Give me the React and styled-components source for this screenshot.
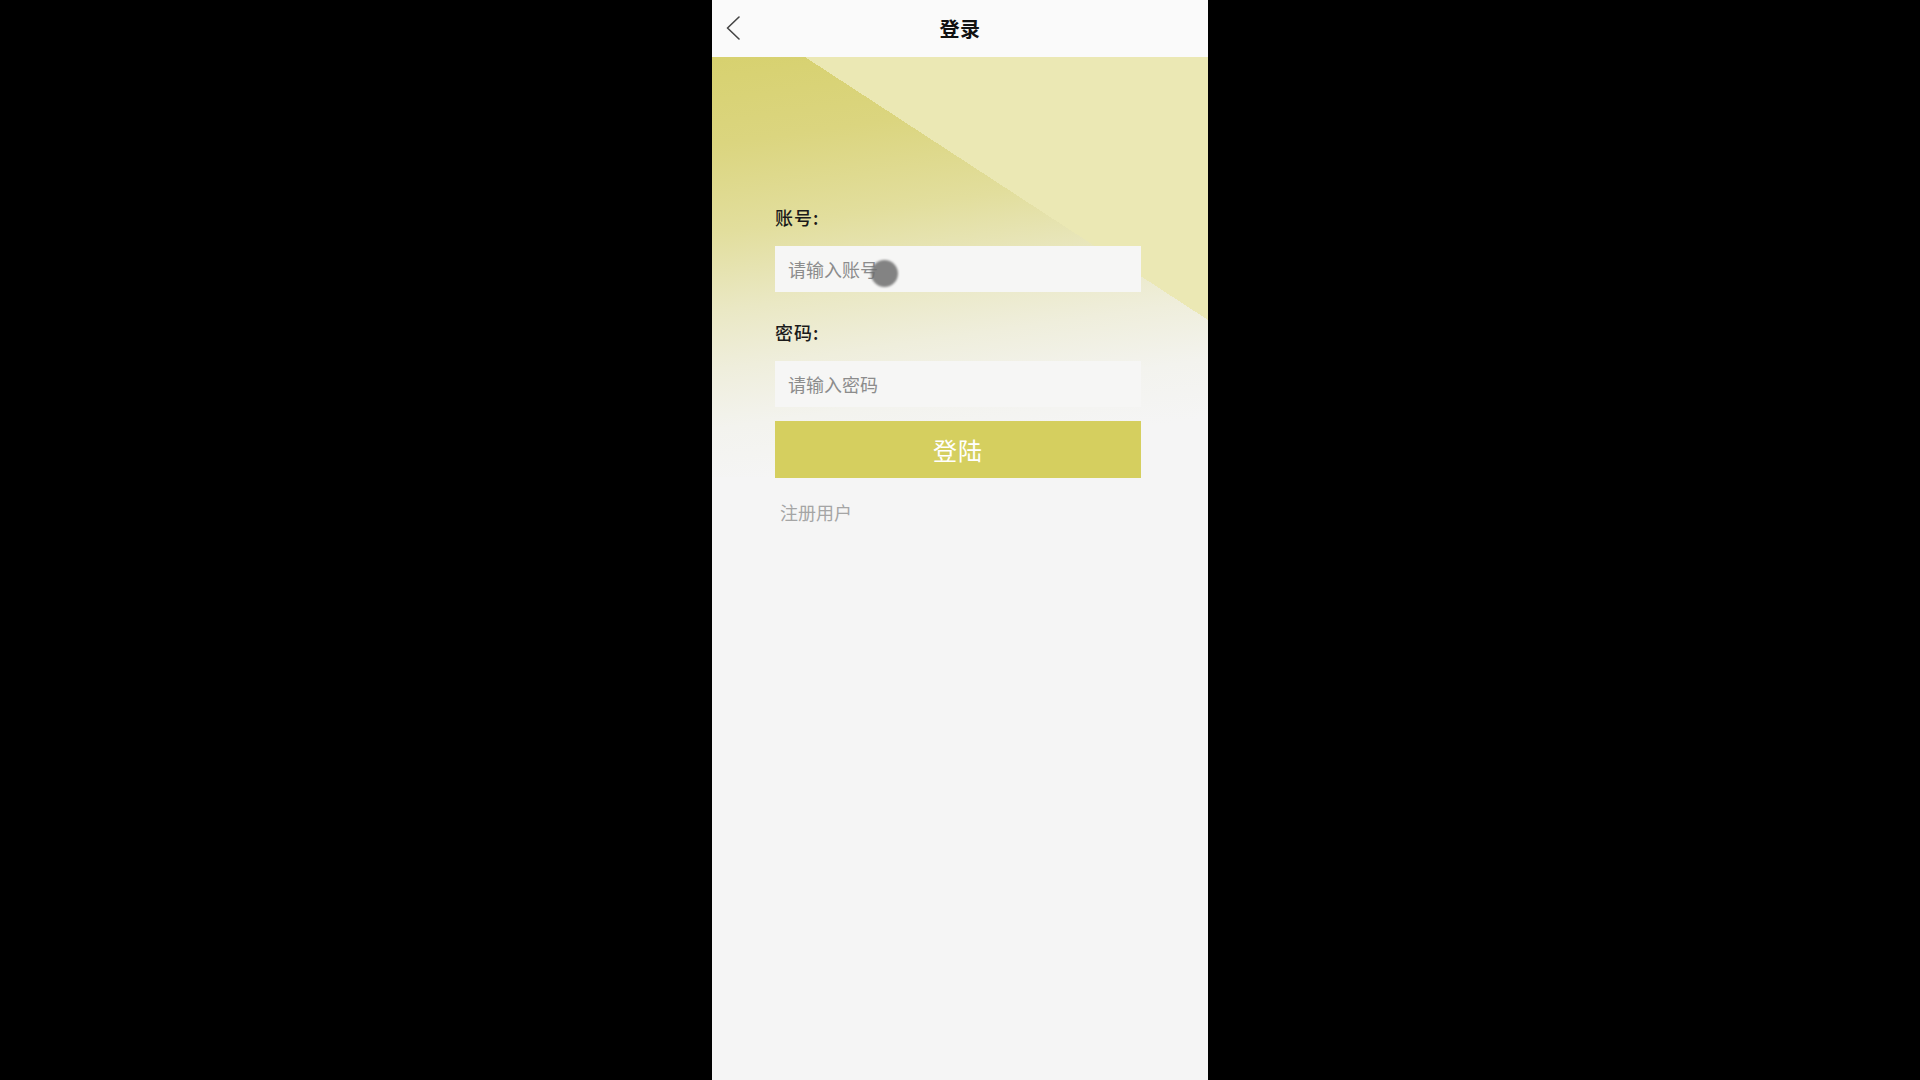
import React from 'react'
import styled, { createGlobalStyle } from 'styled-components'

const GlobalStyle = createGlobalStyle`
html, body {
    margin: 0;
    padding: 0;
    background: #000;
    font-family: "Noto Sans CJK SC", "Noto Sans", sans-serif;
}
`;

export default function App() {
    return (
        <>
            <GlobalStyle />
            <Screen>
                <Phone>
                    <Header>
                        <BackButton aria-label="返回">
                            <svg width="14" height="24" viewBox="0 0 14 24">
                                <polyline points="13,1 1.5,12 13,23" fill="none" stroke="#444" strokeWidth="1.6" strokeLinecap="round" strokeLinejoin="round" />
                            </svg>
                        </BackButton>
                        <Title>登录</Title>
                    </Header>
                    <Body>
                        <Label>账号:</Label>
                        <Input placeholder="请输入账号" />
                        <Label $top={28}>密码:</Label>
                        <Input type="password" placeholder="请输入密码" />
                        <LoginButton>登陆</LoginButton>
                        <RegisterLink>注册用户</RegisterLink>
                    </Body>
                    <TouchDot />
                </Phone>
            </Screen>
        </>
    )
}

const Screen = styled.div`
display: flex;
justify-content: center;
min-height: 1080px;
background: #000;
`;

const Phone = styled.div`
position: relative;
width: 496px;
min-height: 1080px;
display: flex;
flex-direction: column;
background: #f5f5f5;
`;

const Header = styled.div`
height: 57px;
display: flex;
align-items: center;
justify-content: center;
background: #fafafa;
position: relative;
flex-shrink: 0;
`;

const BackButton = styled.button`
position: absolute;
left: 14px;
top: 16px;
padding: 0;
border: 0;
background: none;
display: flex;
`;

const Title = styled.h1`
margin: 0;
font-size: 20px;
font-weight: 700;
color: #111;
letter-spacing: 0.5px;
`;

const Body = styled.div`
flex: 1;
display: flex;
flex-direction: column;
padding: 148px 67px 0 63px;
background:
    linear-gradient(to top right, transparent 50%, #ebe8b4 50%) right top / 403px 263px no-repeat,
    linear-gradient(172deg, #d7d16f 0%, #dbd57f 18%, #e2de9d 36%, #eae8c4 52%, #efeedc 64%, #f3f3ee 76%, #f5f5f5 88%) left top / 100% 420px no-repeat,
    #f5f5f5;
`;

const Label = styled.div`
margin-top: ${p => p.$top || 0}px;
font-size: 18px;
line-height: 24px;
font-weight: 500;
color: #1a1a1a;
letter-spacing: 1px;
`;

const Input = styled.input`
margin-top: 17px;
height: 46px;
box-sizing: border-box;
border: 0;
outline: none;
padding: 0 13px;
background: #f6f6f5;
font-family: inherit;
font-size: 18px;
color: #333;
&::placeholder {
    color: #8c8c8c;
}
`;

const LoginButton = styled.button`
margin-top: 14px;
height: 57px;
border: 0;
background: #d5cf5f;
color: #fff;
font-family: inherit;
font-size: 24px;
letter-spacing: 1px;
cursor: pointer;
`;

const RegisterLink = styled.a`
margin: 22px 0 0 5px;
font-size: 18px;
line-height: 24px;
color: #a5a5a5;
`;

const TouchDot = styled.div`
position: absolute;
left: 159px;
top: 260px;
width: 27px;
height: 27px;
border-radius: 50%;
background: rgba(110, 110, 110, 0.85);
filter: blur(1px);
`;
